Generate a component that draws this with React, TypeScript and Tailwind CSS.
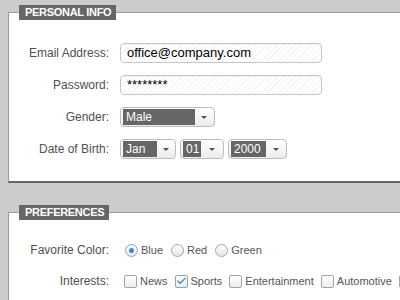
import { Check } from 'lucide-react';

function Field({ label, children }: { label: string; children: React.ReactNode }) {
  return (
    <div className="flex h-5 items-center gap-[11px]">
      <label className="w-[100px] shrink-0 text-right text-[12px] text-[#505050]">{label}</label>
      {children}
    </div>
  );
}

function TextInput({ value }: { value: string }) {
  return (
    <div className="flex h-5 w-[202px] items-center rounded-[4px] border border-[#c6c6c6] bg-[repeating-linear-gradient(135deg,#ffffff_0px,#ffffff_3px,#f4f4f4_3px,#f4f4f4_4px)] pl-[6px] text-[13px] text-black shadow-[inset_0_1px_1px_rgba(0,0,0,0.05)]">
      {value}
    </div>
  );
}

function Select({ value, width, dark }: { value: string; width: number; dark: number }) {
  return (
    <div
      className="flex h-5 shrink-0 items-stretch rounded-[4px] border border-[#bdbdbd] bg-gradient-to-b from-white to-[#ececec] p-px pl-[2px]"
      style={{ width }}
    >
      <div
        className="flex items-center bg-[#666] pl-[3px] text-[12px] leading-none text-white"
        style={{ width: dark }}
      >
        {value}
      </div>
      <div className="flex flex-1 items-center justify-center">
        <span className="h-0 w-0 border-x-[3px] border-t-[3px] border-x-transparent border-t-[#4d4f5a]" />
      </div>
    </div>
  );
}

function Radio({ label, checked }: { label: string; checked?: boolean }) {
  return (
    <div className="flex items-center gap-[3px]">
      <span
        className={
          'flex h-[13px] w-[13px] items-center justify-center rounded-full border bg-gradient-to-b from-white to-[#e6e6e6] ' +
          (checked ? 'border-[#7fa9d4]' : 'border-[#a3a3a3]')
        }
      >
        {checked && <span className="h-[5px] w-[5px] rounded-full bg-[#3a89d6]" />}
      </span>
      <span className="text-[11px] text-[#555]">{label}</span>
    </div>
  );
}

function Checkbox({ label, checked }: { label?: string; checked?: boolean }) {
  return (
    <div className="flex shrink-0 items-center gap-[3px]">
      <span
        className={
          'flex h-[13px] w-[13px] items-center justify-center rounded-[2px] border bg-gradient-to-b from-white to-[#ececec] ' +
          (checked ? 'border-[#7fa9d4]' : 'border-[#a3a3a3]')
        }
      >
        {checked && <Check size={12} strokeWidth={2.5} className="text-[#2f7fd0]" />}
      </span>
      {label && <span className="whitespace-nowrap text-[11px] text-[#555]">{label}</span>}
    </div>
  );
}

function Panel({ title, className, children }: { title: string; className?: string; children: React.ReactNode }) {
  return (
    <fieldset
      className={
        'w-[420px] border-l border-t border-b-2 border-l-[#9a9a9a] border-t-[#9a9a9a] border-b-[#666] bg-white ' +
        (className ?? '')
      }
    >
      <legend className="ml-[10px] bg-[#666] pl-[6px] pr-[5px] text-[11px] font-bold leading-[15px] tracking-[-0.3px] text-white">
        {title}
      </legend>
      {children}
    </fieldset>
  );
}

export default function App() {
  return (
    <div className="h-[300px] w-[400px] overflow-hidden bg-[#cccccc] pl-2 pt-[5px] font-['Liberation_Sans',Arial,sans-serif]">
      <Panel title="PERSONAL INFO" className="pb-[22px] pt-[23px]">
        <div className="flex flex-col gap-3">
          <Field label="Email Address:">
            <TextInput value="office@company.com" />
          </Field>
          <Field label="Password:">
            <TextInput value="********" />
          </Field>
          <Field label="Gender:">
            <Select value="Male" width={95} dark={72} />
          </Field>
          <Field label="Date of Birth:">
            <div className="flex gap-1">
              <Select value="Jan" width={56} dark={34} />
              <Select value="01" width={44} dark={18} />
              <Select value="2000" width={59} dark={35} />
            </div>
          </Field>
        </div>
      </Panel>

      <Panel title="PREFERENCES" className="mt-[22px] pb-6 pt-[20px]">
        <div className="flex flex-col gap-[11px]">
          <Field label="Favorite Color:">
            <div className="ml-[5px] flex gap-[8px]">
              <Radio label="Blue" checked />
              <Radio label="Red" />
              <Radio label="Green" />
            </div>
          </Field>
          <Field label="Interests:">
            <div className="ml-[4px] flex gap-[7px]">
              <Checkbox label="News" />
              <Checkbox label="Sports" checked />
              <Checkbox label="Entertainment" />
              <Checkbox label="Automotive" />
              <Checkbox />
            </div>
          </Field>
        </div>
      </Panel>
    </div>
  );
}
